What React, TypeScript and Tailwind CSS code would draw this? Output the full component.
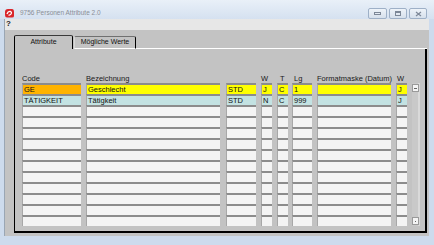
import React from "react";

type Cell = { t?: string; bg?: string };

const WHITE = "#f4f4f4";
const ORANGE = "#ffb300";
const YELLOW = "#ffff00";
const CYAN = "#c3e2e2";

function Col({
  w,
  ml,
  header,
  hpl = 0,
  cells,
}: {
  w: string;
  ml: string;
  header: string;
  hpl?: number;
  cells: Cell[];
}) {
  return (
    <div className={`flex flex-col shrink-0 ${w} ${ml}`}>
      <div
        className="h-[9px] text-[7.5px] leading-[9px] text-[#1a1a1a] whitespace-nowrap"
        style={{ paddingLeft: hpl }}
      >
        {header}
      </div>
      {cells.map((c, i) => (
        <div
          key={i}
          className="h-[11px] border-t-2 border-t-[#8c8c8c] border-l border-l-[#a8a8a8] text-[7.5px] leading-[9px] pl-[1px] text-[#111] whitespace-nowrap overflow-hidden"
          style={{ backgroundColor: c.bg ?? WHITE }}
        >
          {c.t ?? ""}
        </div>
      ))}
    </div>
  );
}

function makeCells(r1: string, r2: string, c1 = YELLOW): Cell[] {
  const arr: Cell[] = [
    { t: r1, bg: c1 },
    { t: r2, bg: CYAN },
  ];
  for (let i = 0; i < 11; i++) arr.push({});
  return arr;
}

export default function App() {
  return (
    <div className="w-[434px] h-[245px] bg-[#cddbed] flex flex-col overflow-hidden font-['Liberation_Sans',Arial,sans-serif]">
      {/* title bar */}
      <div className="h-[19px] shrink-0 flex items-start bg-gradient-to-b from-[#e9f0f8] to-[#d5e1f0]">
        <svg width="11" height="10" viewBox="0 0 11 10" className="ml-[4px] mt-[8px]">
          <path d="M1 4 Q1 1 4 1 L8 1 Q10 1 10 4 L10 8 Q10 9.5 8 9.5 L3 9.5 Q1 9.5 1 7 Z" fill="#d9262b" />
          <path d="M3 6 Q4 3 6.5 3.5 Q8 4 7 6 Q6 7.5 4.5 7" stroke="#fff" strokeWidth="1.3" fill="none" />
        </svg>
        <div className="ml-[5px] mt-[9px] text-[6.5px] leading-[8px] text-[#8a8e96] whitespace-nowrap">
          9756 Personen Attribute 2.0
        </div>
        <div className="ml-auto mr-[7px] mt-[8px] flex gap-[2px]">
          <div className="w-[19px] h-[11px] rounded-[2px] border border-[#9eb0c7] bg-gradient-to-b from-[#eef3f9] to-[#d6e0ec] flex items-center justify-center">
            <div className="w-[7px] h-[3px] border border-[#7c8797]" />
          </div>
          <div className="w-[18px] h-[11px] rounded-[2px] border border-[#9eb0c7] bg-gradient-to-b from-[#eef3f9] to-[#d6e0ec] flex items-center justify-center">
            <div className="w-[6px] h-[5px] border border-[#7c8797] border-t-2" />
          </div>
          <div className="w-[18px] h-[11px] rounded-[2px] border border-[#9eb0c7] bg-gradient-to-b from-[#eef3f9] to-[#d6e0ec] flex items-center justify-center">
            <svg width="7" height="6" viewBox="0 0 7 6">
              <path d="M1 1 L6 5 M6 1 L1 5" stroke="#7c8797" strokeWidth="1.2" />
            </svg>
          </div>
        </div>
      </div>

      {/* client */}
      <div className="flex-1 ml-[4px] mr-[5px] mb-[9px] flex flex-col border-l border-l-[#9aa6b4]">
        {/* menu bar */}
        <div className="h-[11px] shrink-0 bg-[#e7e7e7] text-[8px] leading-[10px] font-bold text-[#222] pl-[1px]">
          ?
        </div>
        {/* gray area */}
        <div className="flex-1 bg-[#c3c3c3] pl-[9px] pr-[2px] pt-[5px] pb-[3px] flex flex-col">
          {/* tabs */}
          <div className="h-[14px] shrink-0 flex items-end">
            <div className="w-[59px] h-[14px] border-l border-l-black border-t border-t-[#3a3a3a] border-r border-r-black rounded-t-[2px] flex items-center justify-center text-[7px] text-[#111]">
              Attribute
            </div>
            <div className="ml-[1px] w-[62px] h-[13px] border-t border-t-[#707070] border-l border-l-[#d8d8d8] border-r border-r-black border-b border-b-white rounded-t-[2px] flex items-center justify-center text-[7px] text-[#111] whitespace-nowrap">
              Mögliche Werte
            </div>
            <div className="flex-1 h-[1px] bg-white" />
          </div>
          {/* panel */}
          <div className="flex-1 border-l border-l-black border-r-2 border-r-black border-b-2 border-b-black pl-[7px] pt-[25px] flex items-start">
            <Col w="w-[59px]" ml="ml-0" header="Code" cells={makeCells("GE", "TÄTIGKEIT", ORANGE)} />
            <Col w="w-[134px]" ml="ml-[5px]" header="Bezeichnung" cells={makeCells("Geschlecht", "Tätigkeit")} />
            <Col w="w-[30px]" ml="ml-[6px]" header="" cells={makeCells("STD", "STD")} />
            <Col w="w-[11px]" ml="ml-[5px]" header="W" cells={makeCells("J", "N")} />
            <Col w="w-[11px]" ml="ml-[5px]" header="T" hpl={3} cells={makeCells("C", "C")} />
            <Col w="w-[20px]" ml="ml-[4px]" header="Lg" hpl={2} cells={makeCells("1", "999")} />
            <Col w="w-[74px]" ml="ml-[5px]" header="Formatmaske (Datum)" cells={makeCells("", "")} />
            <Col w="w-[11px]" ml="ml-[5px]" header="W" hpl={1} cells={makeCells("J", "J")} />
            {/* scrollbar */}
            <div className="ml-[5px] w-[8px] mt-[9px] h-[143px] bg-[#c9c9c9] border-r-2 border-r-[#dadada] flex flex-col justify-between py-[1px]">
              <div className="w-[7px] h-[8px] bg-[#f4f4f4] border border-[#9a9a9a] flex items-center justify-center">
                <div className="w-[3px] h-[1px] bg-[#666]" />
              </div>
              <div className="w-[7px] h-[8px] bg-[#f4f4f4] border border-[#9a9a9a] flex items-center justify-center">
                <div className="w-[1px] h-[1px] bg-[#666]" />
              </div>
            </div>
          </div>
        </div>
      </div>
    </div>
  );
}
